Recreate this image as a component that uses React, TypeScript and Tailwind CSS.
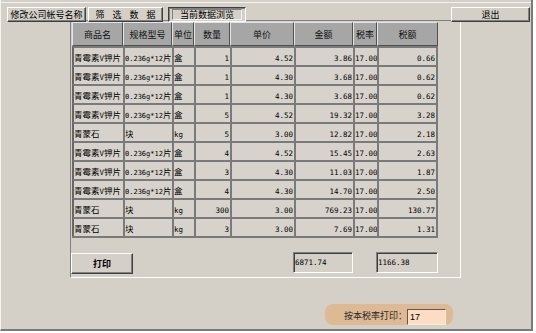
import React from "react";

const A = ["青霉素V钾片", "0.236g*12片", "盒"];
const B = ["青蒙石", "块", "kg"];
const rows: string[][] = [
  [...A, "1", "4.52", "3.86", "17.00", "0.66"],
  [...A, "1", "4.30", "3.68", "17.00", "0.62"],
  [...A, "1", "4.30", "3.68", "17.00", "0.62"],
  [...A, "5", "4.52", "19.32", "17.00", "3.28"],
  [...B, "5", "3.00", "12.82", "17.00", "2.18"],
  [...A, "4", "4.52", "15.45", "17.00", "2.63"],
  [...A, "3", "4.30", "11.03", "17.00", "1.87"],
  [...A, "4", "4.30", "14.70", "17.00", "2.50"],
  [...B, "300", "3.00", "769.23", "17.00", "130.77"],
  [...B, "3", "3.00", "7.69", "17.00", "1.31"],
];
const headers = ["商品名", "规格型号", "单位", "数量", "单价", "金额", "税率", "税额"];
const widths = ["w-[51px]", "w-[49px]", "w-[22px]", "w-[36px]", "w-[64px]", "w-[59px]", "w-[24px]", "w-[61px]"];

function Mixed({ text, small }: { text: string; small?: boolean }) {
  const parts = text.match(/[\x00-\x7f]+|[^\x00-\x7f]+/g) || [];
  return (
    <>
      {parts.map((p, i) =>
        /^[\x00-\x7f]+$/.test(p) ? (
          <span
            key={i}
            className={
              small
                ? "font-['DejaVu_Sans_Mono','Liberation_Mono',monospace] text-[7px]"
                : "font-['DejaVu_Sans_Mono','Liberation_Mono',monospace] text-[7.5px]"
            }
          >
            {p}
          </span>
        ) : (
          <span key={i} className="text-[8.5px]">
            {p}
          </span>
        )
      )}
    </>
  );
}

const raised =
  "border border-t-white border-l-white border-r-[#404040] border-b-[#404040] shadow-[inset_-1px_-1px_0_#808080]";

export default function App() {
  return (
    <div className="min-h-screen bg-white">
      <div className="w-[533px] h-[331px] bg-[#d4d0c8] border-l border-l-[#f4f4f4] border-r-2 border-b-2 border-r-[#7a7a7a] border-b-[#7a7a7a] flex flex-col font-['Noto_Sans_CJK_SC','Noto_Sans',sans-serif] text-black overflow-hidden">
        <div className="h-[2px] shrink-0" />
        <div className="h-px bg-[#f2f2f2] shrink-0" />
        {/* top buttons */}
        <div className="relative z-10 mt-[4px] flex h-[15px] pl-[6px] pr-[1px] shrink-0">
          <div className={`w-[79px] h-[15px] flex items-center justify-center text-[9px] leading-none bg-[#d4d0c8] ${raised}`}>
            修改公司帐号名称
          </div>
          <div className={`ml-[2px] w-[75px] h-[15px] flex items-center justify-center gap-[8px] text-[9px] leading-none bg-[#d4d0c8] ${raised}`}>
            <span>筛</span>
            <span>选</span>
            <span>数</span>
            <span>据</span>
          </div>
          <div className="ml-[5px] w-[78px] h-[15px] flex items-center justify-center text-[9px] leading-none bg-[#d4d0c8] border border-t-[#404040] border-l-[#404040] border-r-white border-b-white shadow-[inset_1px_1px_0_#808080]">
            <div className="w-[70px] h-[11px] flex items-center justify-center border border-[#808080] border-r-[#f0f0f0] border-b-[#f0f0f0]">
              当前数据浏览
            </div>
          </div>
          <div className="flex-1" />
          <div className={`w-[79px] h-[15px] flex items-center justify-center text-[9px] leading-none bg-[#d4d0c8] ${raised}`}>
            退出
          </div>
        </div>

        {/* main panel */}
        <div className="-mt-[2px] ml-[69px] w-[391px] h-[258px] shrink-0 border border-t-[#808080] border-l-[#808080] border-r-white border-b-white flex flex-col">
          <div className="ml-[1px] mt-[1px] w-fit">
            <div className="flex">
              {headers.map((h, i) => (
                <div
                  key={h}
                  className={`${widths[i]} h-[24px] flex items-center justify-center bg-[#a6a6a6] border border-t-[#e4e4e4] border-l-[#e4e4e4] border-r-[#505050] border-b-[#505050] text-[9px] leading-none text-[#111]`}
                >
                  {h}
                </div>
              ))}
            </div>
            <div className="border-b-2 border-[#7a7a7a]">
              {rows.map((r, ri) => (
                <div key={ri} className="flex">
                  {r.map((c, ci) => (
                    <div
                      key={ci}
                      className={`${widths[ci]} h-[19px] bg-[#d7d3cc] border-t-2 border-l-2 border-[#7a7a7a] ${ci === 7 ? "border-r-2" : ""} ${ci === 0 ? "border-l-[#666]" : ""} ${ci >= 3 ? "text-right pr-[1px]" : "text-left"} leading-[10px] pt-[1px] whitespace-nowrap overflow-hidden`}
                    >
                      <Mixed text={c} small={ci === 1} />
                    </div>
                  ))}
                </div>
              ))}
            </div>
          </div>
          <div className="mt-[14px] flex items-start">
            <div className={`mt-[1px] w-[62px] h-[21px] flex items-center justify-center text-[9px] font-bold leading-none ${raised}`}>
              打印
            </div>
            <div className="ml-[160px] w-[60px] h-[21px] border border-t-[#808080] border-l-[#808080] border-r-white border-b-white shadow-[inset_1px_1px_0_#404040] pl-[1px] pt-px leading-[9px]">
              <Mixed text="6871.74" />
            </div>
            <div className="ml-[23px] w-[62px] h-[21px] border border-t-[#808080] border-l-[#808080] border-r-white border-b-white shadow-[inset_1px_1px_0_#404040] pl-[1px] pt-px leading-[9px]">
              <Mixed text="1166.38" />
            </div>
          </div>
        </div>

        {/* bottom pill */}
        <div className="mt-[26px] ml-[324px] w-[128px] h-[21px] shrink-0 rounded-[8px] bg-[#ddb994] flex items-center justify-end pr-[7px]">
          <span className="text-[9px] leading-none text-[#2a2a2a] mt-[1px]">按本税率打印：</span>
          <div className="self-end w-[39px] h-[16px] bg-[#fcdcc2] border border-t-[#5a5a5a] border-l-[#5a5a5a] border-r-[#f6ead8] border-b-[#f6ead8] flex items-center pl-[2px] font-['Liberation_Sans',sans-serif] text-[9px] leading-none">
            17
          </div>
        </div>
      </div>
    </div>
  );
}
